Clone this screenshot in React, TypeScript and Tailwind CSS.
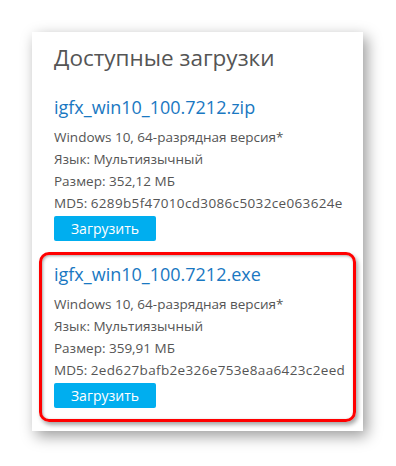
const files = [
  {
    name: 'igfx_win10_100.7212.zip',
    size: '352,12 МБ',
    md5: '6289b5f47010cd3086c5032ce063624e',
  },
  {
    name: 'igfx_win10_100.7212.exe',
    size: '359,91 МБ',
    md5: '2ed627bafb2e326e753e8aa6423c2eed',
  },
];

function FileInfo({ file }: { file: (typeof files)[number] }) {
  return (
    <>
      <a href="#" className="block text-[18px] leading-[24px] text-[#1a78c2]">
        {file.name}
      </a>
      <div className="mt-[7px] text-[13.5px] leading-[22px] text-[#555]">
        <p>Windows 10, 64-разрядная версия*</p>
        <p>Язык: Мультиязычный</p>
        <p>Размер: {file.size}</p>
        <p className="whitespace-nowrap">
          MD5: <span className="tracking-[0.35px]">{file.md5}</span>
        </p>
      </div>
      <button className="mt-[2px] flex h-[25px] w-[102px] items-center justify-center rounded-[2px] bg-[#00aeef] text-[14px] text-white">
        Загрузить
      </button>
    </>
  );
}

export default function App() {
  return (
    <div className="min-h-[466px] bg-white pt-[32px] font-['Open_Sans',sans-serif]">
      <div className="ml-[32px] w-[331px] bg-white px-[22px] pt-[10px] pb-[9px] shadow-[4px_5px_14px_rgba(0,0,0,0.4)]">
        <h2 className="text-[22.5px] leading-[32px] text-[#555]">Доступные загрузки</h2>

        {/* первый файл */}
        <div className="mt-[21px]">
          <FileInfo file={files[0]} />
        </div>

        {/* второй файл, выделенный рамкой */}
        <div className="-mx-[15px] mt-[11px] rounded-[10px] border-[3px] border-[#ff0000] px-[12px] pt-[7px] pb-[11px] shadow-[2px_3px_4px_rgba(0,0,0,0.35),inset_1px_1px_3px_rgba(0,0,0,0.35)]">
          <FileInfo file={files[1]} />
        </div>
      </div>
    </div>
  );
}
